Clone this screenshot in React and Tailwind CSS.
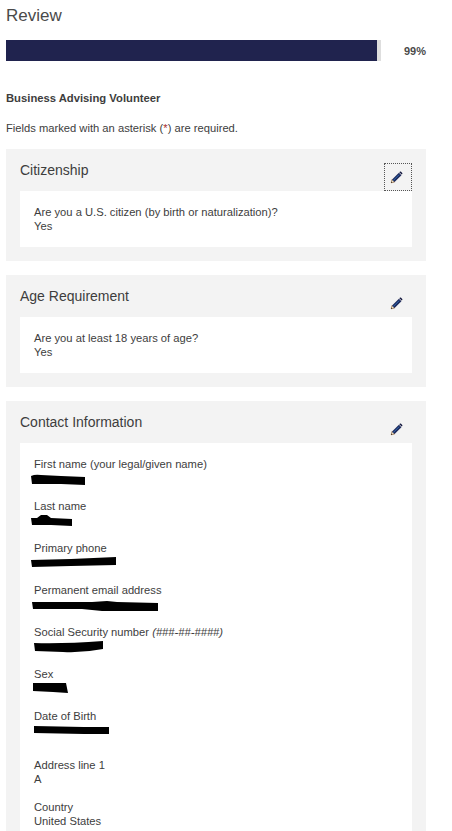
const Pencil = () => (
  <svg width="13" height="13" viewBox="0 0 14 14" className="-ml-[3px]" aria-hidden="true">
    <path d="M1.2 12.8 L2 9.3 L9.6 1.8 L12.3 4.5 L4.7 12 Z" fill="#1f2a5c" />
    <path d="M1.2 12.8 L2 9.3 L4.7 12 Z" fill="#e8e2d0" stroke="#c9873a" strokeWidth="0.5" />
    <path d="M1.2 12.8 L1.5 11.4 L2.6 12.5 Z" fill="#111" />
    <path d="M3.2 10.6 L9.9 3.9" stroke="#2f6fb8" strokeWidth="1" />
    <path d="M10 1.4 L10.9 0.6 Q11.4 0.3 11.9 0.8 L13.2 2.1 Q13.6 2.6 13.2 3.1 L12.6 3.9 Z" fill="#15193f" />
  </svg>
);

const Blob = ({ w, h = 10, d, mt = 0, ml = 0 }) => (
  <svg width={w} height={h} viewBox={`0 0 ${w} ${h}`} className="block" style={{ marginTop: mt, marginLeft: ml }} aria-hidden="true">
    <path d={d} fill="#000" />
  </svg>
);

const Section = ({ title, focused, children }) => (
  <section className="bg-[#f3f3f3] px-[14px] pb-[14px]">
    <div className="flex h-[42px] items-start justify-between">
      <h2 className="pt-[13px] text-[14px] leading-4 font-normal text-[#3d3d3d]">{title}</h2>
      <button
        className={`mt-[14px] flex h-[28px] w-[28px] items-center justify-center ${focused ? "border border-dotted border-[#555]" : ""}`}
      >
        <Pencil />
      </button>
    </div>
    <div className="bg-white p-[14px]">{children}</div>
  </section>
);

const Field = ({ label, value, blob, extra }) => (
  <div className={extra ? "mb-[21px]" : "mb-[14px] last:mb-0"}>
    <div className="h-[14px]">{label}</div>
    <div className="flow-root h-[14px]">{value ?? blob}</div>
  </div>
);

export default function App() {
  return (
    <div className="h-[831px] w-[452px] overflow-hidden bg-white pl-[6px] font-['Liberation_Sans',Arial,sans-serif] text-[11.2px] leading-[14px] text-[#3d3d3d]">
      <div className="w-[420px]">
        <h1 className="h-[40px] pt-[6px] text-[17px] leading-5 font-normal text-[#4a4a4a]">Review</h1>
        <div className="flex items-center">
          <div className="h-[21px] w-[375px] bg-[#dedede]">
            <div className="h-full w-[371px] bg-[#20234e]" />
          </div>
          <div className="flex-1 text-right text-[11px] font-bold text-[#4a4a4a]">99%</div>
        </div>
        <p className="mt-[30px] text-[11.25px] font-bold">Business Advising Volunteer</p>
        <p className="mt-[16px]">
          Fields marked with an asterisk (<span className="text-[#a33]">*</span>) are required.
        </p>
        <div className="mt-[14px] flex flex-col gap-[14px]">
          <Section title="Citizenship" focused>
            <div className="h-[14px]">Are you a U.S. citizen (by birth or naturalization)?</div>
            <div className="h-[14px]">Yes</div>
          </Section>
          <Section title="Age Requirement">
            <div className="h-[14px]">Are you at least 18 years of age?</div>
            <div className="h-[14px]">Yes</div>
          </Section>
          <Section title="Contact Information">
            <Field
              label="First name (your legal/given name)"
              blob={<Blob w={54} h={11} ml={-3} mt={3} d="M0 2 Q4 0 10 1 L30 2 L54 3 L54 11 L30 10 L10 10 L1 10 Z" />}
            />
            <Field
              label="Last name"
              blob={<Blob w={41} h={11} ml={-3} mt={2} d="M0 3 L6 3 L10 0 L16 0 L20 3 L41 4 L41 11 L20 10 L1 10 Z" />}
            />
            <Field
              label="Primary phone"
              blob={<Blob w={85} h={11} ml={-3} mt={2} d="M0 3 L40 2 L85 0 L85 8 L40 9 L1 10 Z" />}
            />
            <Field
              label="Permanent email address"
              blob={<Blob w={126} h={11} ml={-2} mt={4} d="M0 1 L60 1 L75 0 L85 1 L126 2 L126 10 L70 10 L50 8 L1 8 Z" />}
            />
            <Field
              label={
                <>
                  Social Security number <em>(###-##-####)</em>
                </>
              }
              blob={<Blob w={71} h={13} ml={-1} mt={2} d="M1 2 Q30 3 70 0 L70 8 Q50 12 30 11 L2 10 Z" />}
            />
            <Field
              label="Sex"
              blob={<Blob w={35} h={11} ml={-1} mt={2} d="M0 0 L33 0 L35 10 L20 9 L0 8 Z" />}
            />
            <Field
              extra
              label="Date of Birth"
              blob={<Blob w={75} h={9} mt={3} d="M0 0 L50 1 L75 1 L75 8 L50 8 L0 7 Z" />}
            />
            <Field label="Address line 1" value="A" />
            <Field label="Country" value="United States" />
          </Section>
        </div>
      </div>
    </div>
  );
}
